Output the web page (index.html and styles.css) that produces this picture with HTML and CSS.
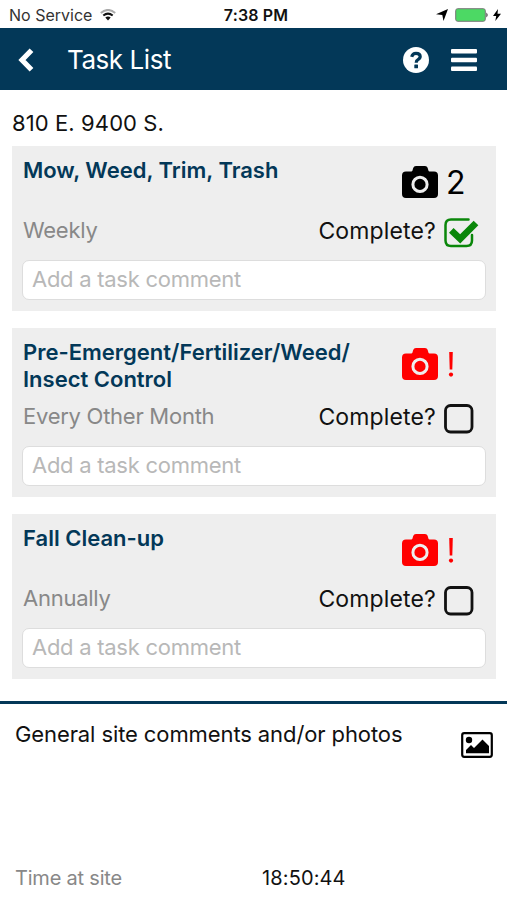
FILE: index.html
```html
<!DOCTYPE html>
<html lang="en">
<head>
<meta charset="utf-8">
<title>Task List</title>
<link rel="stylesheet" href="styles.css">
</head>
<body>
<svg class="defs" width="0" height="0">
  <symbol id="camera" viewBox="0 0 36 32">
    <path fill="currentColor" fill-rule="evenodd" d="M4 5.500h5.300q.8 0 1.100-.8l.8-2.700Q11.800 0 14 0h9q2 0 2.600 1.800l.9 2.900q.2.800 1 .8H32q4 0 4 4V28q0 4-4 4H4q-4 0-4-4V9.500q0-4 4-4zM18 9.800a8.600 8.600 0 1 0 0 17.200a8.600 8.600 0 1 0 0-17.200zM18 12.800a5.600 5.600 0 1 1 0 11.200a5.600 5.600 0 1 1 0-11.200z"/>
  </symbol>
</svg>
<header class="status">
  <div class="carrier"><span>No Service</span>
    <svg width="16" height="12" viewBox="0 0 16 12" fill="none"><path d="M.8 4Q8-2.200 15.200 4" stroke="#aaa" stroke-width="1.900"/><path d="M3.300 6.600Q8 2.700 12.700 6.600" stroke="#111" stroke-width="2"/><path d="M5.300 8.600Q8 6.600 10.700 8.600L8 11.500z" fill="#111"/></svg>
  </div>
  <div class="clock">7:38 PM</div>
  <div class="power">
    <svg width="12" height="12" viewBox="0 0 12 12"><path d="M12 0L7.500 12L6.300 6L0 5.200z"/></svg>
    <svg class="battery" width="34" height="14" viewBox="0 0 34 14"><rect x=".7" y=".7" width="29.600" height="12.600" rx="2" fill="#4cd964" stroke="#777"/><path d="M31.500 4.500q2 2.500 0 5z"/></svg>
    <svg width="8" height="12" viewBox="0 0 8 12"><path d="M5 0L0 7h3.200L2.300 12L8 4.700H4.500z"/></svg>
  </div>
</header>
<nav class="bar">
  <svg class="back" width="16" height="24" viewBox="0 0 16 24"><path d="M13.500 2.200L4 12L13.500 21.800" fill="none" stroke="#fff" stroke-width="5.200"/></svg>
  <h1 class="bar-title">Task List</h1>
  <svg class="help" width="26" height="26" viewBox="0 0 26 26"><circle cx="13" cy="13" r="13" fill="#fff"/><path d="M8.700 9.800Q9.500 6.300 13 6.300Q17.200 6.300 17.200 9.600Q17.200 11.500 15 12.600Q13.200 13.500 13.200 15.800" fill="none" stroke="#033858" stroke-width="3.200"/><rect x="11.300" y="17.600" width="3.700" height="3.600" rx=".5" fill="#033858"/></svg>
  <svg class="menu" width="26" height="22" viewBox="0 0 26 22" fill="#fff"><rect width="26" height="4.600" rx="1"/><rect y="8.700" width="26" height="4.600" rx="1"/><rect y="17.400" width="26" height="4.600" rx="1"/></svg>
</nav>
<main class="tasks">
  <h2 class="address">810 E. 9400 S.</h2>
  <section class="card">
    <div class="card-head">
      <h3 class="task">Mow, Weed, Trim, Trash</h3>
      <div class="photos"><svg width="36" height="32"><use href="#camera"/></svg><span class="count">2</span></div>
    </div>
    <div class="card-meta">
      <span class="freq">Weekly</span>
      <span class="complete">Complete?</span>
      <svg class="check" width="36" height="30" viewBox="0 0 36 30" fill="none"><path d="M24.500 1.500H7Q1.500 1.500 1.500 7V22.500Q1.500 28 7 28H22.500Q28 28 28 22.500V17" stroke="#0a870a" stroke-width="2.500" stroke-linecap="round"/><path d="M7.300 12.300L16.200 20.800L32 5" stroke="#0a870a" stroke-width="6.600"/></svg>
    </div>
    <input class="comment" type="text" placeholder="Add a task comment">
  </section>
  <section class="card">
    <div class="card-head">
      <h3 class="task">Pre-Emergent/Fertilizer/Weed/<br>Insect Control</h3>
      <div class="photos missing"><svg width="36" height="32"><use href="#camera"/></svg><svg class="bang" width="6" height="25" viewBox="0 0 6 25" fill="currentColor"><path d="M1.200 0h3.600l-.5 17.500h-2.600z"/><circle cx="3" cy="22.600" r="2.100"/></svg></div>
    </div>
    <div class="card-meta">
      <span class="freq">Every Other Month</span>
      <span class="complete">Complete?</span>
      <svg class="check" width="36" height="30" viewBox="0 0 36 30" fill="none"><rect x="1.500" y="1.500" width="26.500" height="26.500" rx="5" stroke="#111" stroke-width="2.800"/></svg>
    </div>
    <input class="comment" type="text" placeholder="Add a task comment">
  </section>
  <section class="card">
    <div class="card-head">
      <h3 class="task">Fall Clean-up</h3>
      <div class="photos missing"><svg width="36" height="32"><use href="#camera"/></svg><svg class="bang" width="6" height="25" viewBox="0 0 6 25" fill="currentColor"><path d="M1.200 0h3.600l-.5 17.500h-2.600z"/><circle cx="3" cy="22.600" r="2.100"/></svg></div>
    </div>
    <div class="card-meta">
      <span class="freq">Annually</span>
      <span class="complete">Complete?</span>
      <svg class="check" width="36" height="30" viewBox="0 0 36 30" fill="none"><rect x="1.500" y="1.500" width="26.500" height="26.500" rx="5" stroke="#111" stroke-width="2.800"/></svg>
    </div>
    <input class="comment" type="text" placeholder="Add a task comment">
  </section>
</main>
<footer class="site">
  <div class="general">
    <span class="general-text">General site comments and/or photos</span>
    <svg class="image" width="32" height="26" viewBox="0 0 32 26"><rect x="1.200" y="1.200" width="29.600" height="23.600" rx="2" fill="none" stroke="#000" stroke-width="2.200"/><circle cx="8" cy="8" r="3.200"/><path d="M5 21.300V18L10 13l3 3L21.500 7.500L28 14v7.300z"/></svg>
  </div>
  <div class="time"><span class="time-label">Time at site</span><span class="time-value">18:50:44</span></div>
</footer>
</body>
</html>
```
FILE: styles.css
```css
* { box-sizing: border-box; }
body { margin: 0; width: 507px; height: 900px; overflow: hidden; background: #fff; color: #111; font-family: Inter, "Liberation Sans", sans-serif; font-size: 22px; display: flex; flex-direction: column; }
.defs { position: absolute; }
h1, h2, h3 { margin: 0; font-weight: 400; }
svg { display: block; flex: none; }
span, h1, h2, h3 { white-space: nowrap; }

.status { height: 28px; padding: 2px 6px 0 9px; display: grid; grid-template-columns: 1fr auto 1fr; align-items: center; font-size: 16px; }
.carrier { display: flex; align-items: center; gap: 8px; color: #333; }
.clock { font-weight: 600; letter-spacing: .15px; padding-left: 2px; }
.power { display: flex; align-items: center; justify-content: flex-end; gap: 5px; }
.battery { margin: 0 -1px 0 2px; }

.bar { height: 62px; background: #033858; color: #fff; display: flex; align-items: center; padding: 1px 30px 0 18px; }
.bar-title { margin-left: 33px; flex: 1; font-size: 26px; letter-spacing: -.45px; }
.menu { margin-left: 22px; }

.tasks { padding: 0 11px 0 12px; display: flex; flex-direction: column; height: 611px; }
.address { height: 56px; line-height: 66px; font-size: 22px; letter-spacing: .1px; }
.card { background: #eee; padding: 11px 10px 11px; margin-bottom: 17px; }
.card-head { display: flex; justify-content: space-between; min-height: 56px; }
.task { font-size: 22px; line-height: 27px; font-weight: 600; color: #033858; padding: 0 0 6px 1px; }
.photos { width: 84px; height: 32px; margin-top: 9px; display: flex; align-items: center; color: #000; }
.missing { color: #f00; }
.count { font-size: 32px; line-height: 32px; margin-left: 8px; padding-top: 1px; }
.bang { margin-left: 10px; }
.card-meta { height: 34px; margin-bottom: 13px; display: flex; align-items: center; }
.freq { flex: 1; padding: 0 0 1px 1px; color: #888; letter-spacing: -.26px; }
.complete { font-size: 23px; letter-spacing: .15px; padding-top: 2px; }
.check { margin: 5px 6px 0 8px; }
.comment { display: block; width: 100%; height: 40px; border: 1px solid #ddd; border-radius: 7px; background: #fff; padding: 0 9px 2px; font: 400 22px Inter, sans-serif; letter-spacing: -.27px; outline: 0; }
.comment::placeholder { color: #b8b8b8; opacity: 1; }

.site { flex: 1; border-top: 3px solid #033858; display: flex; flex-direction: column; justify-content: space-between; padding: 15px 14px 8px 15px; }
.general { display: flex; justify-content: space-between; line-height: 30px; letter-spacing: -.1px; }
.image { margin-top: 13px; }
.time { display: flex; line-height: 28px; font-size: 20px; }
.time-label { width: 247px; color: #888; letter-spacing: -.2px; }
.time-value { letter-spacing: .12px; }
```
